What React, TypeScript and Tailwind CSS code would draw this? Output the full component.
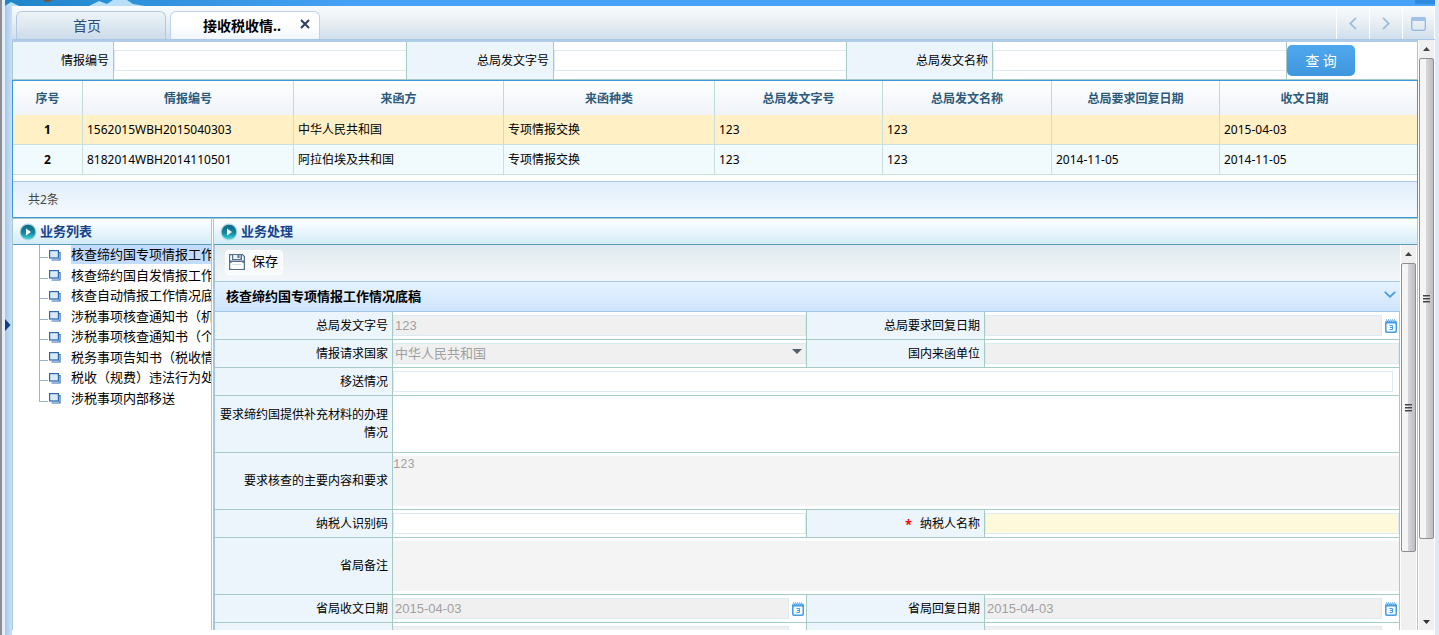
import React, { useState } from "react";

interface Letter {
  code: string;
  from: string;
  kind: string;
  docNo: string;
  docName: string;
  replyDate: string;
  receiveDate: string;
}

const letters: Letter[] = [
  {
    code: "1562015WBH2015040303",
    from: "中华人民共和国",
    kind: "专项情报交换",
    docNo: "123",
    docName: "123",
    replyDate: "",
    receiveDate: "2015-04-03",
  },
  {
    code: "8182014WBH2014110501",
    from: "阿拉伯埃及共和国",
    kind: "专项情报交换",
    docNo: "123",
    docName: "123",
    replyDate: "2014-11-05",
    receiveDate: "2014-11-05",
  },
];

const headers = [
  "序号",
  "情报编号",
  "来函方",
  "来函种类",
  "总局发文字号",
  "总局发文名称",
  "总局要求回复日期",
  "收文日期",
];

const tasks = [
  "核查缔约国专项情报工作",
  "核查缔约国自发情报工作",
  "核查自动情报工作情况底",
  "涉税事项核查通知书（机",
  "涉税事项核查通知书（个",
  "税务事项告知书（税收情",
  "税收（规费）违法行为处",
  "涉税事项内部移送",
];

const CalendarIcon = () => (
  <svg width="12" height="14" viewBox="0 0 12 14" aria-hidden="true">
    <path d="M0 3.5A2 2 0 0 1 2 1.5h8a2 2 0 0 1 2 2V12a2 2 0 0 1-2 2H2a2 2 0 0 1-2-2z" fill="#459de6" />
    <path d="M1.5 0v3M3.5 0v3M5.5 0v3M7.5 0v3M9.5 0v3" stroke="#8cc4f1" strokeWidth="1" />
    <rect x="1.5" y="4.5" width="9" height="8" rx="1" fill="#f4faff" />
    <path d="M4.5 6.5h3v4h-3M5 8.5h2.5" fill="none" stroke="#459de6" strokeWidth="1" />
  </svg>
);

const PlayIcon = () => (
  <svg width="18" height="18" viewBox="0 0 18 18" aria-hidden="true">
    <defs>
      <linearGradient id="ball" x1="0" y1="0" x2="0" y2="1">
        <stop offset="0" stopColor="#0d6a86" />
        <stop offset="0.55" stopColor="#13859c" />
        <stop offset="1" stopColor="#3fd6de" />
      </linearGradient>
    </defs>
    <circle cx="9" cy="9" r="8.5" fill="#b5d5dc" />
    <circle cx="9" cy="9" r="7.3" fill="url(#ball)" />
    <path d="M7 5.5 12 9 7 12.5z" fill="#fff" />
  </svg>
);

const NodeIcon = () => (
  <svg width="12" height="11" viewBox="0 0 12 11" className="shrink-0" aria-hidden="true">
    <path d="M2.5 10H11V2.5H9" fill="none" stroke="#2e68b0" strokeWidth="1.2" />
    <path d="M3 8.7h6.7V3" fill="none" stroke="#b8d6f2" strokeWidth="1" />
    <rect x="0.6" y="0.6" width="8.8" height="7.4" fill="#d9ebfb" stroke="#2e68b0" strokeWidth="1.2" />
  </svg>
);

const SaveIcon = () => (
  <svg width="16" height="16" viewBox="0 0 16 16" aria-hidden="true">
    <path d="M.6.6h12.9l1.9 2v12.8H.6z" fill="#f7fafc" stroke="#56728e" strokeWidth="1.2" />
    <path d="M3 0h10v6H3z" fill="#56728e" />
    <path d="M4.2 1h7.3v4H4.2z" fill="#eef3f7" />
    <path d="M8.5 1h2v3h-2z" fill="#56728e" />
    <path d="M1 6.5h14V9H1z" fill="#56728e" />
    <path d="M2.5 8h11v7h-11z" fill="#fff" />
    <path d="M3.5 10.5h9" stroke="#d5dfe8" />
  </svg>
);

const Grip = () => (
  <span className="flex w-[7px] flex-col gap-px">
    <span className="h-0.5 border-b border-[#999] bg-[#444]" />
    <span className="h-0.5 border-b border-[#999] bg-[#444]" />
    <span className="h-0.5 border-b border-[#999] bg-[#444]" />
  </span>
);

const Scrollbar: React.FC<{ thumb: string; rest: string; down?: boolean }> = ({
  thumb,
  rest,
  down,
}) => (
  <div className="flex w-[15px] shrink-0 flex-col bg-[#f0f0f0]" aria-hidden="true">
    <div className="flex h-[18px] shrink-0 items-center justify-center">
      <svg width="7" height="4" viewBox="0 0 7 4">
        <path d="M0 4 3.5 0 7 4z" fill="#444" />
      </svg>
    </div>
    <div
      className={`flex items-center justify-center rounded-xs border border-[#8f8f93] bg-linear-to-r from-[#f5f5f5] from-45% via-[#d6d6da] via-50% to-[#bcbcc2] ${thumb}`}
    >
      <Grip />
    </div>
    <div className={`flex items-end justify-center ${rest}`}>
      {down && (
        <svg width="7" height="4" viewBox="0 0 7 4" className="mb-1.5">
          <path d="M0 0h7L3.5 4z" fill="#333" />
        </svg>
      )}
    </div>
  </div>
);

const SearchField: React.FC<{ id: string; label: string }> = ({ id, label }) => (
  <>
    <label
      htmlFor={id}
      className="flex items-center justify-end border-r border-[#a6cbc6] bg-[#edf5fc] pr-1"
    >
      {label}
    </label>
    <div className="flex min-w-0 items-center border-r border-[#a6cbc6]">
      <input id={id} type="text" className="h-[21px] w-full border border-r-0 border-[#dcebef] px-1 outline-none" />
    </div>
  </>
);

const PanelTitle: React.FC<{ text: string }> = ({ text }) => (
  <h2 className="flex h-[26px] shrink-0 items-center gap-[3px] border-b border-[#5b9ab6] bg-linear-to-b from-white to-[#d3ecf8] pl-1.5 text-[13px] font-bold text-[#15428b]">
    <PlayIcon />
    {text}
  </h2>
);

interface FieldProps {
  id: string;
  label: string;
  required?: boolean;
  wide?: boolean;
  children: React.ReactNode;
}

const Field: React.FC<FieldProps> = ({ id, label, required, wide, children }) => (
  <>
    <label
      htmlFor={id}
      className="flex items-center justify-end border-r border-b border-[#a6cbc6] bg-[#edf5fc] pr-1 pl-1 text-right leading-[18px]"
    >
      {required && <span className="mr-2 text-[13px] font-bold text-[#f00]">*</span>}
      {label}
    </label>
    <div
      className={`flex min-w-0 border-r border-b border-[#a6cbc6] bg-white py-[3px] ${wide ? "col-span-3" : ""}`}
    >
      {children}
    </div>
  </>
);

const boxClass =
  "h-[21px] w-full min-w-0 border border-[#dcebf3] px-px font-['Liberation_Sans','Noto_Sans_CJK_SC',sans-serif] text-[13px] text-[#a0a0a0] outline-none disabled:bg-[#f0f0f0]";
const areaClass =
  "block h-[50px] w-full resize-none font-['Liberation_Mono',monospace] text-xs leading-[18px] text-[#a0a0a0] outline-none disabled:bg-[#f4f4f4]";

const DateBox: React.FC<{ id: string; value: string }> = ({ id, value }) => (
  <>
    <input id={id} type="text" value={value} disabled className={boxClass} />
    <button type="button" aria-label="选择日期" className="flex w-[17px] shrink-0 items-center justify-center">
      <CalendarIcon />
    </button>
  </>
);

const App: React.FC = () => {
  const [activeTask, setActiveTask] = useState(0);
  const [taxId, setTaxId] = useState("");
  const [taxName, setTaxName] = useState("");
  const cell = "border-r border-b border-[#c9dfdb] px-1 last:border-r-0";

  return (
    <div className="flex h-screen overflow-hidden bg-white font-['Noto_Sans','Noto_Sans_CJK_SC',sans-serif] text-xs text-black">
      <div className="w-[5px] shrink-0 border-l-2 border-[#8d8d92] bg-[#e3eefa]" />
      <div className="flex min-w-0 flex-1 flex-col">
        <div className="flex h-1.5 shrink-0 justify-end bg-linear-to-r from-[#1d86c8] via-[#46a2f7] via-25% to-[#46a2f7]">
          <svg width="170" height="6" viewBox="0 0 170 6" className="mr-auto" aria-hidden="true">
            <path d="M0 6 6 2l8 4zM84 6l10-5 8 3 6-4h14l6 4 12 2z" fill="#b9e0f8" />
            <path d="M38 0h10l-4 2h-4z" fill="#6d5a4c" />
          </svg>
          <div className="h-1 w-5 bg-[#2e8adf]" />
        </div>

        <div className="flex min-h-0 flex-1">
          <div className="flex w-[7px] shrink-0 items-center bg-linear-to-r from-[#a8c8ea] to-[#c9e0f8] pt-2">
            <button type="button" aria-label="展开菜单">
              <svg width="6" height="12" viewBox="0 0 6 12">
                <path d="M0 0 5.5 6 0 12z" fill="#0c3f86" />
              </svg>
            </button>
          </div>

          <div className="flex min-w-0 flex-1 flex-col pb-[5px]">
            <div className="flex h-[34px] shrink-0 items-end border-b border-[#a9c8e8] bg-linear-to-b from-[#f9fcfe] via-[#e8eff3] to-[#d0deec] pl-1">
              <button
                type="button"
                className="mr-1 h-7 w-[150px] rounded-t-md border border-b-0 border-[#b3c9df] bg-linear-to-b from-[#edf4f6] to-[#cddceb] pr-2 text-sm text-[#2f4a74]"
              >
                首页
              </button>
              <div className="flex h-7 w-[150px] items-center rounded-t-md border border-b-0 border-[#bdd4ec] bg-linear-to-b from-white from-50% to-[#f1f6fc]">
                <button type="button" className="flex-1 pl-[14px] text-sm font-bold text-black">
                  接收税收情..
                </button>
                <button type="button" aria-label="关闭" className="mr-2 mb-1 flex size-3 items-center justify-center">
                  <svg width="10" height="10" viewBox="0 0 10 10">
                    <path d="m1 1 8 8M9 1 1 9" stroke="#2c3f66" strokeWidth="2" />
                  </svg>
                </button>
              </div>
              <div className="ml-auto flex h-full border-r border-white pt-0.5">
                <button type="button" aria-label="向左" className="flex w-[33px] items-center justify-center border-l border-white">
                  <svg width="8" height="13" viewBox="0 0 8 13">
                    <path d="M7 .8 1.2 6.5 7 12.2" fill="none" stroke="#9bbfe0" strokeWidth="1.8" />
                  </svg>
                </button>
                <button type="button" aria-label="向右" className="flex w-[33px] items-center justify-center border-l border-white">
                  <svg width="8" height="13" viewBox="0 0 8 13">
                    <path d="M1 .8 6.8 6.5 1 12.2" fill="none" stroke="#9bbfe0" strokeWidth="1.8" />
                  </svg>
                </button>
                <button type="button" aria-label="最大化" className="flex w-[32px] items-center justify-center border-l border-white">
                  <svg width="15" height="14" viewBox="0 0 15 14">
                    <rect x=".7" y=".7" width="13.6" height="12.6" rx="2" fill="none" stroke="#8fb8e0" strokeWidth="1.3" />
                    <path d="M0 4V2a2 2 0 0 1 2-2h11a2 2 0 0 1 2 2v2z" fill="#9fc3e8" />
                  </svg>
                </button>
              </div>
            </div>

            <div className="flex min-h-0 flex-1">
              <div className="flex min-w-0 flex-1 flex-col border-t-2 border-[#b0cce6]">
                <form
                  onSubmit={(e) => e.preventDefault()}
                  className="grid h-[38px] shrink-0 grid-cols-[101fr_293fr_147fr_293fr_146fr_294fr_130fr] border border-t-0 border-[#a6cbc6]"
                >
                  <SearchField id="q-code" label="情报编号" />
                  <SearchField id="q-docno" label="总局发文字号" />
                  <SearchField id="q-docname" label="总局发文名称" />
                  <div className="flex items-center">
                    <button
                      type="submit"
                      className="h-[31px] w-[68px] rounded-[5px] bg-linear-to-b from-[#4fa7ee] to-[#3f97de] text-sm text-white"
                    >
                      查 询
                    </button>
                  </div>
                </form>

                <div className="shrink-0 border border-[#3f97dc]">
                  <table className="w-full table-fixed border-separate border-spacing-0">
                    <colgroup>
                      <col className="w-[70px]" />
                      <col className="w-[211px]" />
                      <col className="w-[210px]" />
                      <col className="w-[211px]" />
                      <col className="w-[168px]" />
                      <col className="w-[169px]" />
                      <col className="w-[168px]" />
                      <col />
                    </colgroup>
                    <thead>
                      <tr className="h-[34px] bg-linear-to-b from-white to-[#eff3f9]">
                        {headers.map((h, i) => (
                          <th
                            key={h}
                            className={`border-r border-[#c1dbd7] pt-0.5 font-bold text-[#2c5a7b] last:border-r-0 ${i === 7 ? "pr-7" : ""}`}
                          >
                            {h}
                          </th>
                        ))}
                      </tr>
                    </thead>
                    <tbody>
                      {letters.map((row, i) => (
                        <tr key={row.code} className="h-[30px] bg-[#f1fafd] first:bg-[#fff0c5]">
                          <td className={`${cell} text-center font-bold`}>{i + 1}</td>
                          <td className={cell}>{row.code}</td>
                          <td className={cell}>{row.from}</td>
                          <td className={cell}>{row.kind}</td>
                          <td className={cell}>{row.docNo}</td>
                          <td className={cell}>{row.docName}</td>
                          <td className={cell}>{row.replyDate}</td>
                          <td className={cell}>{row.receiveDate}</td>
                        </tr>
                      ))}
                    </tbody>
                  </table>
                  <div className="mt-1.5 flex h-9 items-center border-t border-[#abc9e8] bg-linear-to-b from-[#e1eefa] to-[#f5faff] pl-[15px] text-[#444]">
                    共2条
                  </div>
                </div>

                <div className="flex min-h-0 flex-1 gap-px border-t border-r border-[#a6cbc6]">
                  <div className="flex w-[200px] shrink-0 flex-col border-x border-[#a6cbc6]">
                    <PanelTitle text="业务列表" />
                    <ul className="ml-[26px] grid h-[164px] auto-rows-fr overflow-hidden text-[13px]">
                      {tasks.map((t, i) => (
                        <li key={t} className="flex min-h-0 border-l border-[#9fb0cc] last:border-transparent">
                          <span className="-ml-px h-[13px] w-[9px] shrink-0 border-b border-l border-[#9fb0cc]" />
                          <span className="ml-px flex items-center">
                            <NodeIcon />
                          </span>
                          <button
                            type="button"
                            onClick={() => setActiveTask(i)}
                            className={`ml-2.5 h-[19px] leading-[19px] whitespace-nowrap ${i === activeTask ? "bg-[#c1dcff]" : ""}`}
                          >
                            {t}
                          </button>
                        </li>
                      ))}
                    </ul>
                  </div>

                  <div className="flex min-w-0 flex-1 flex-col">
                    <div className="border-l border-[#a6cbc6]">
                      <PanelTitle text="业务处理" />
                    </div>
                    <div className="flex min-h-0 flex-1 gap-px pr-px">
                      <div className="min-w-0 flex-1 overflow-hidden border-l-2 border-[#a3c6e3]">
                        <div className="flex h-9 items-center bg-linear-to-b from-[#dfeaee] to-[#f4f7fb] pb-0.5 pl-2.5">
                          <button
                            type="button"
                            className="flex h-[25px] items-center gap-[7px] rounded-sm border border-white bg-[#f8fafc] pr-1 pl-[3px] text-[13px]"
                          >
                            <SaveIcon />
                            保存
                          </button>
                        </div>
                        <div className="flex h-[31px] items-center justify-between border-y border-[#a5c8ea] bg-linear-to-b from-[#e5f2ff] to-[#cfe5fc] pr-1 pl-[11px]">
                          <h3 className="text-[13px] font-bold">核查缔约国专项情报工作情况底稿</h3>
                          <button type="button" aria-label="收起" className="pb-1">
                            <svg width="12" height="7" viewBox="0 0 12 7">
                              <path d="m.8.8 5.2 5 5.2-5" fill="none" stroke="#3f97e2" strokeWidth="1.6" />
                            </svg>
                          </button>
                        </div>

                        <form className="grid grid-cols-[178px_minmax(0,414fr)_178px_minmax(0,415fr)]">
                          <Field id="f-docno" label="总局发文字号">
                            <input id="f-docno" type="text" value="123" disabled className={boxClass} />
                          </Field>
                          <Field id="f-reply" label="总局要求回复日期">
                            <DateBox id="f-reply" value="" />
                          </Field>
                          <Field id="f-country" label="情报请求国家">
                            <div className="relative w-full">
                              <select
                                id="f-country"
                                disabled
                                className={`${boxClass} block appearance-none opacity-100`}
                              >
                                <option>中华人民共和国</option>
                              </select>
                              <svg
                                width="10"
                                height="5"
                                viewBox="0 0 10 5"
                                className="pointer-events-none absolute top-1.5 right-1"
                                aria-hidden="true"
                              >
                                <path d="M0 0h10L5 5z" fill="#555e70" />
                              </svg>
                            </div>
                          </Field>
                          <Field id="f-unit" label="国内来函单位">
                            <input id="f-unit" type="text" disabled className={boxClass} />
                          </Field>
                          <Field id="f-move" label="移送情况" wide>
                            <input id="f-move" type="text" className={`${boxClass} mr-1.5`} />
                          </Field>
                          <Field id="f-extra" label="要求缔约国提供补充材料的办理情况" wide>
                            <textarea id="f-extra" className={areaClass} />
                          </Field>
                          <Field id="f-content" label="要求核查的主要内容和要求" wide>
                            <textarea id="f-content" value="123" disabled className={areaClass} />
                          </Field>
                          <Field id="f-taxid" label="纳税人识别码">
                            <input
                              id="f-taxid"
                              type="text"
                              value={taxId}
                              onChange={(e) => setTaxId(e.target.value)}
                              className={boxClass}
                            />
                          </Field>
                          <Field id="f-taxname" label="纳税人名称" required>
                            <input
                              id="f-taxname"
                              type="text"
                              value={taxName}
                              onChange={(e) => setTaxName(e.target.value)}
                              className={`${boxClass} bg-[#fff9dc]`}
                            />
                          </Field>
                          <Field id="f-remark" label="省局备注" wide>
                            <textarea id="f-remark" disabled className={areaClass} />
                          </Field>
                          <Field id="f-provin" label="省局收文日期">
                            <DateBox id="f-provin" value="2015-04-03" />
                          </Field>
                          <Field id="f-provout" label="省局回复日期">
                            <DateBox id="f-provout" value="2015-04-03" />
                          </Field>
                          <Field id="f-cityin" label="">
                            <DateBox id="f-cityin" value="" />
                          </Field>
                          <Field id="f-cityout" label="">
                            <DateBox id="f-cityout" value="" />
                          </Field>
                        </form>
                      </div>
                      <Scrollbar thumb="grow-[289] basis-0" rest="grow-[78] basis-0" />
                    </div>
                  </div>
                </div>
              </div>
              <div className="flex px-px">
                <Scrollbar thumb="grow-[481] basis-0" rest="grow-[91] basis-0" down />
              </div>
            </div>
          </div>
        </div>
      </div>
      <div className="w-1 shrink-0 bg-[#dfe9f6]" />
    </div>
  );
};

export default App;
